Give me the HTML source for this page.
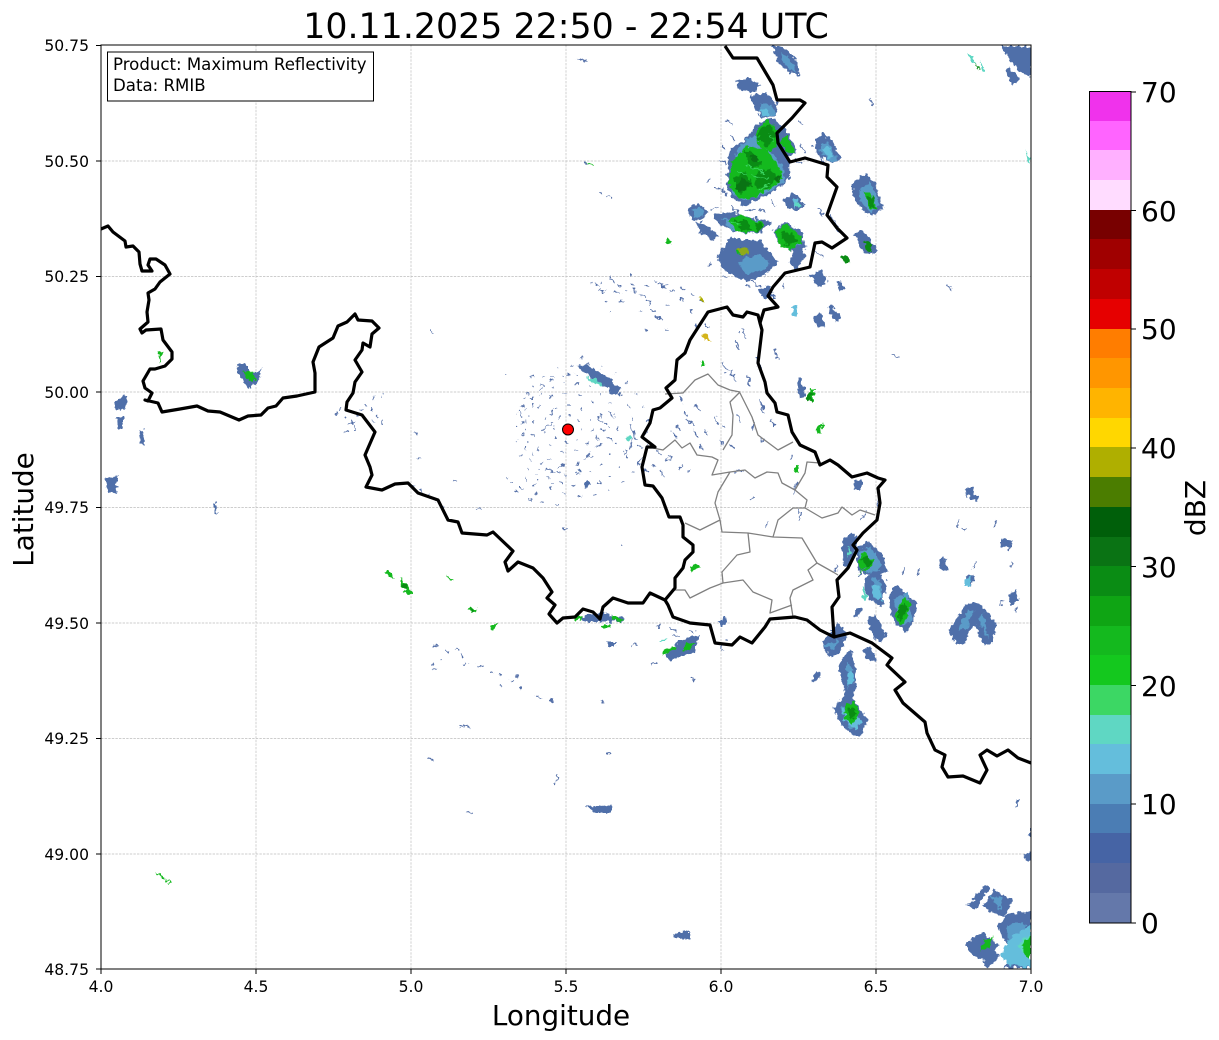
<!DOCTYPE html>
<html><head><meta charset="utf-8"><style>
html,body{margin:0;padding:0;background:#fff;width:1219px;height:1040px;overflow:hidden}
svg{display:block}
text{font-family:"DejaVu Sans","Liberation Sans",sans-serif;fill:#000}
.y{font-size:15.6px;text-anchor:end}
.x{font-size:15.6px;text-anchor:middle}
.c{font-size:28px}
.bl{fill:#4f6fa9}.cy{fill:#5a9bc8}.sk{fill:#64bedc}.te{fill:#5fd7c3}.lg{fill:#3cd764}.gr{fill:#14b91e}.dg{fill:#0a8c14}.vd{fill:#0a7314}
.sp{fill:none;stroke:#5570a8;stroke-width:1.3}
</style></head><body>
<svg width="1219" height="1040" viewBox="0 0 1219 1040" xmlns="http://www.w3.org/2000/svg">
<defs><clipPath id="ax"><rect x="101" y="45" width="930" height="924"/></clipPath>
<filter id="j" filterUnits="userSpaceOnUse" x="101" y="45" width="930" height="924" color-interpolation-filters="sRGB">
<feTurbulence type="fractalNoise" baseFrequency="0.22" numOctaves="2" seed="4" result="n"/>
<feDisplacementMap in="SourceGraphic" in2="n" scale="7" xChannelSelector="R" yChannelSelector="G"/>
</filter></defs>
<text x="566" y="38" font-size="34.800" text-anchor="middle">10.11.2025 22:50 - 22:54 UTC</text>
<g stroke="#bdbdbd" stroke-width=".7" stroke-dasharray="2.4 1.2" fill="none">
<path d="M256 45V969M411 45V969M566 45V969M721 45V969M876 45V969M101 161H1031M101 276.500H1031M101 392H1031M101 507.500H1031M101 623H1031M101 738.500H1031M101 854H1031"/>
</g>
<g clip-path="url(#ax)">
<g filter="url(#j)">
<!-- blue base -->
<path class="bl" d="M772 46L782 46L797 60L800 76L788 72L778 62ZM735 80L748 78L760 85L755 92L740 90ZM750 96L765 93L778 105L775 115L762 118L755 108ZM730 148L745 140L755 125L772 118L783 126L797 150L788 156L791 176L780 187L765 197L745 206L735 200L727 190L728 165ZM778 134L788 134L797 152L786 158L778 148ZM813 146L822 133L832 140L841 160L830 162L818 155ZM853 183L865 173L875 183L883 208L872 217L858 206L853 195ZM783 200L793 193L805 203L798 212L788 208ZM688 208L698 203L708 212L702 221L692 219ZM713 215L730 212L772 222L760 233L735 232L720 225ZM773 232L785 222L800 230L807 248L795 253L780 245ZM795 245L807 255L800 264L795 270L789 262ZM717 256L730 237L745 240L760 240L778 262L765 275L750 281L735 277L722 268ZM695 222L705 224L720 236L712 240L700 232ZM758 290L768 285L775 298L764 298ZM853 234L862 230L877 248L874 254L864 252ZM810 275L822 270L827 283L818 287ZM837 282L842 281L844 290L839 291ZM813 318L820 312L825 325L818 328ZM827 308L832 305L842 318L835 322ZM1000 46L1031 46L1031 77L1020 72ZM1005 70L1010 67L1020 80L1012 85ZM797 378L801 378L806 396L800 398ZM853 482L862 480L862 490L855 490ZM965 490L972 487L978 500L970 500ZM1002 539L1013 540L1010 549L1002 546ZM842 540L852 532L858 540L850 567L843 565ZM856 548L868 542L882 553L887 572L872 577L858 570ZM867 576L878 570L887 585L882 607L870 600L865 590ZM888 596L896 585L917 603L912 625L905 633L892 618ZM853 617L858 607L862 609L858 618ZM867 620L874 615L887 635L882 643L874 638ZM862 650L870 647L877 660L870 663ZM949 632L965 605L978 602L997 625L992 643L984 645L975 625L962 645L955 642ZM938 560L945 558L947 570L940 570ZM1008 595L1016 590L1018 600L1012 607ZM823 642L838 623L848 635L838 655L828 657ZM838 665L850 650L857 670L855 692L850 710L838 710L845 690ZM833 708L848 693L868 720L860 738L845 730ZM718 622L726 617L727 622L722 627ZM810 680L820 670L822 675L814 683ZM115 402L124 395L127 398L126 408L117 410ZM117 416L123 416L123 430L118 430ZM139 430L143 430L145 446L141 444ZM106 478L118 477L117 494L108 492ZM237 365L245 363L250 375L263 368L260 378L250 388L240 378ZM213 503L216 503L218 514L215 513ZM585 806L611 805L611 813L597 813ZM673 935L690 929L690 940L677 938ZM580 618L600 612L625 618L622 622L585 622ZM607 642L617 642L615 646L608 646ZM967 905L985 885L990 888L975 910ZM983 905L995 890L1013 900L1005 917L990 912ZM965 945L980 932L1000 945L985 960L972 955ZM997 925L1010 913L1031 912L1031 968L1003 968L1022 950L1005 942ZM982 960L993 948L1000 955L988 968ZM1031 825L1028 836L1031 838ZM1024 855L1031 850L1031 862L1026 862ZM1015 800L1020 800L1016 808ZM965 576L975 575L970 588ZM680 640L700 635L695 652L670 660L665 655Z"/>
<path class="sp" d="M1001 542l8 3M1011 542l-2 7M947 284l4 6M893 355l6 1M928 734l4 6M815 250l9 8M818 208l5 8M830 215l10 18M820 155l6 10M798 120l4 4M725 120l8 5M712 210l6-4M870 100l4 5M741 330l5 8M735 340l4 10M748 375l2 12M760 400l3 10M775 348l3 12M757 357l3 12M722 362l5 10M730 370l6 12M755 420l-3 10M762 405l2 8M771 420l3 6M737 415l3 8M720 440l3 5M730 445l4 2M795 488l-3 6M798 482l-3 5M790 455l2 5M760 435l3 6M680 395l3 8M683 412l5 4M676 425l4 6M687 420l6 5M693 430l4 7M705 430l3 4M715 418l3 6M723 425l2 3M652 465l4 2M660 470l4 6M682 465l-2 6M645 470l3 3M690 470l-3 2M700 445l3 6M672 432l5 5M695 405l4 6M668 455l4 3M670 458l-5 5M658 450l2 4M735 472l8-2M750 500l3-3M768 521l-2 7M799 520l3-8M800 510l-2 4M860 520l3-4M866 510l-2 8M877 500l1 8M838 565l-4 8M858 577l2-6M962 528l4 1M957 527l1-6M1010 567l3-4M1011 543l-3 8M996 520l-2 8M917 575l2-5M905 567l-3 8M944 560l-3 7M976 560l-3 8M1000 606l3-6M1015 612l3-6"/>
<path class="sp" d="M595 283l4 3M600 290l6 2M610 278l5 4M615 292l6 2M620 300l5 1M630 283l4 3M632 290l5 2M640 295l6 2M647 300l4 4M605 300l3 1M660 285l6 2M670 290l5 2M680 287l5 3M665 305l3 2M680 297l4 4M690 293l4 3M650 310l6 2M655 317l8 3M598 290l2-2M610 310l2 0M640 310l3 2M690 310l2 3M700 300l3 3M655 280l3 2M630 275l3 0M618 285l2 2M625 290l2 2M645 285l3 2M590 283l2 0M600 283l2 0M695 325l3 4M645 330l3 2M665 330l3 0M705 323l3 5"/>
<!-- speckles west -->
<path class="sp" d="M341 407l-2 3M336 412l1 3M345 418l3-2M352 420l2 3M360 412l4-2M365 406l3 2M372 408l-2 4M376 415l2 2M344 433l5-2M348 425l6-2M354 430l1-4M355 415l3 0M373 420l2 2M382 420l0 4M373 397l1 3M382 396l1 0M414 432l2 3M418 458l2 2M454 480l4 1M412 485l4 2M420 490l3 3M428 496l5 2M435 502l4 1M443 505l3 1M478 508l3 1M475 510l3 1M530 376l4 0M435 645l4 1M445 650l4 2M440 660l3 0M455 648l5 2M460 655l3 3M463 665l4-2M430 665l3-1M432 670l4 0M478 665l6 2M490 672l4 1M498 675l4 0M500 685l3 3M510 680l4 1M520 688l3 0M515 677l5-1M535 697l8 1M550 700l5 1M458 725l5 2M464 725l6 2M428 758l5 2M558 775l-2 5M555 785l2-2M608 752l2 2M602 700l2 3M467 812l6 2M692 679l2 1M725 640l3 0M720 648l2-2M720 650l4 0M670 628l6 3M673 635l5 2M690 630l5 3M683 640l3 2M657 627l4-1M632 645l6 0M652 664l4-2M577 59l9 1M690 678l3 0"/>
<path class="sp" d="M586 60l3 1M430 332l2 0M584 163l3 1M599 193l4 2M607 196l4 2M605 197l2 0M563 529l3 0M620 545l2 0"/>
<!-- radar rings -->
<g fill="none" stroke="#5570a8" stroke-width="1.100">
<circle cx="568" cy="429" r="14" stroke-dasharray="2 9"/>
<circle cx="568" cy="429" r="24" stroke-dasharray="3 11"/>
<circle cx="568" cy="429" r="36" stroke-dasharray="3 12"/>
<circle cx="572" cy="429" r="46" stroke-dasharray="2 11"/>
<circle cx="578" cy="430" r="56" stroke-dasharray="3 10"/>
<circle cx="582" cy="430" r="66" stroke-dasharray="2 13"/>
<path d="M542 431l6-6 5-3M550 415l3-5M605 424l4 3M598 417l4 5M600 428l6 2M610 412l3 6M607 437l5 4M596 447l6-3M585 459l5-6M596 435l3 6M548 470l8 3M557 468l7-3M560 472l-2 1M629 425l5 8 1 7M632 440l-2 8M626 450l-2 5M638 445l4 4M640 461l-2 4"/>
<path stroke-width="1.100" d="M505 477l3 1M515 490l3 2M510 483l2 0M525 478l2 4M535 495l3-2M533 485l4-1M521 488l3 0M540 501l4 1M530 498l2 3M545 470l3-1M550 485l2 0M536 475l1 0M555 505l4 0M527 394l3 1M520 413l2 4M525 420l1 3M520 405l3 1M550 395l0 3M550 377l4 0M566 373l3 3M540 385l4 1M505 375l2 1M580 357l3 2"/>
</g>
<path class="bl" d="M578 366l4-2 12 4 26 19-1 7-3 1-22-15-12-9ZM583 483l5-2 2 4-6 2ZM576 471l4-1 2 2-5 1Z"/>
<path class="te" d="M586 377l10 2 8 6-3 1-10-4ZM625 437l5-2 2 4-5 2Z"/>
<!-- cyan -->
<path class="cy" d="M782 52L790 60L797 72L790 70L782 60ZM760 103L772 105L775 114L764 116ZM740 145L755 135L765 145L782 165L785 180L770 192L745 200L733 195L730 170ZM820 145L828 142L838 160L829 161L820 152ZM860 190L870 182L880 205L870 213L860 200ZM692 210L700 207L705 215L695 218ZM722 218L760 220L758 230L732 230ZM781 232L795 230L800 245L787 248ZM738 262L745 258L760 254L770 262L762 270L745 274ZM858 552L870 548L880 560L880 570L868 573ZM872 578L880 580L884 600L874 598ZM893 600L908 592L912 620L902 626ZM958 630L968 610L974 610L968 628ZM984 612L988 640L978 620ZM846 660L852 670L848 690ZM840 705L860 722L850 730ZM1005 925L1025 922L1031 960L1012 963ZM990 895L1003 897L1000 910ZM825 645L838 640L836 648L830 650Z"/>
<path class="sk" d="M847 672l6 0 1 12-6 0ZM871 585l8 0 3 14-7 0ZM842 708l12 4 8 10-7 8-11-10ZM792 200l5-2 2 8-5 2ZM1000 956L1012 935L1031 925L1031 968L1010 965ZM822 149l7-2 5 10-6 2ZM758 110l8-1 4 5-6 2ZM792 307l5-1 1 10-4 0ZM965 580l7-4-2 10-5 0Z"/>
<path class="te" d="M1018 945l13-12 0 14-8 6ZM848 545l4 8-4 3ZM794 202l6 0 0 5-5 0ZM980 60l5 11-3 0ZM966 52l6 5 4 7-3-1ZM1025 150l5 8 1 4-3-1ZM862 585L868 597 864 600ZM660 640l8-2-4 4Z"/>
<!-- greens -->
<path class="gr" d="M757 128L768 120L780 132L776 145L770 152L758 145ZM781 137L787 136L795 152L788 154L782 146ZM733 160L745 147L765 148L782 170L782 180L768 190L750 199L737 197L728 182ZM727 220L740 214L765 224L760 231L738 232ZM775 231L785 225L797 232L803 240L790 250L780 246ZM864 192L870 192L878 210L870 208ZM857 575L865 570L868 565ZM895 615L905 595L911 605L904 623L900 625ZM858 562L864 552L874 562L868 571L860 570ZM846 705L854 702L860 715L852 725L844 718ZM748 250L737 256L735 250ZM985 940L993 936L990 948L980 950ZM1022 945L1031 935L1031 958L1025 955ZM794 468l4-1 1 5-4 1ZM817 425l6-2-2 10-5 0ZM810 388l4 1 0 12-5 0ZM666 238l6 4-3 3-5-3ZM690 567l8-3 4 2-10 6ZM388 570l6 8-3 0-6-6ZM400 578l8 8 5 8-5 1-5-6ZM470 607l8 3-4 3-6-3ZM493 623l4 1-2 5-6-3ZM445 574l8 7-3 0ZM574 616l10-1-3 5-7 2ZM603 624l8 0-1 4-8 0ZM612 614l12 6-4 2-8-1ZM663 650l13-5-2 5-12 5ZM685 644l10-2-5 8-5 1ZM158 352l5-2-3 14ZM242 372l12-1 1 10-6 0ZM155 870l6 5 4 4-3 0ZM165 878l8 6-3 0ZM586 163l8 1-2 2ZM700 360l3 0 2 5-3 0Z"/>
<path class="dg" d="M760 128L770 124L776 135L768 148L758 140ZM745 150L755 155L762 165L750 168ZM733 178L745 172L752 185L740 195ZM757 172L770 170L778 178L766 190L755 186ZM735 220L745 220L752 229L743 231ZM755 222L764 225L758 232ZM780 232L790 232L797 240L787 247ZM865 240L872 243L870 252L865 248ZM866 195L873 198L876 210L870 205ZM898 610L905 603L908 610L900 622ZM848 708L855 708L857 716L850 720ZM862 558L868 556L872 563L866 568ZM840 255l7 2 4 5-5 2ZM808 391l5 2-1 8-5-1ZM402 582l5 3-3 5ZM470 608l5 2-2 3ZM740 247L746 250 742 256ZM973 62l7 7-2 0Z"/>
<path d="M737 250l8-3 4 6-6 3Z" fill="#8faa1a"/><path d="M700 333l8 3 2 5-5 0Z" fill="#d4b41a"/><path d="M697 296l5 2 3 5-2 0Z" fill="#afaf00"/>
<path class="vd" d="M736 184L744 178 750 184 744 192 738 192ZM775 176l5 0 0 5-4 2ZM750 156l6-1 2 6-4 2Z"/>
<path fill="none" stroke="#3cd764" stroke-width="1" d="M745 165l20 8M750 176l18 3M738 172l9 3M758 190l12-6M730 222l10 2M770 135l4 6"/>
<path class="sp" stroke-width="1.500" d="M730 135l5 6M722 145l4 6M720 160l6 4M722 190l5 6M730 205l8 8M745 210l10 0M760 208l6 5M770 200l6 6M800 145l5 7M795 158l7 6M708 236l6 5M712 262l-3 3M722 275l6 4M745 285l6 2M752 281l8 6M782 283l3 6M720 190l-4-3M710 180l-5 2"/>
</g>
</g>
<!-- admin -->
<g fill="none" stroke="#808080" stroke-width="1.300" stroke-linejoin="round">
<path d="M665 394L683 393L695 380L708 374L718 385L730 390L740 392L730 402L733 415L732 435L723 450M740 393L752 417L758 435L778 450L793 442M653 448L663 450L675 440L682 448L690 443L697 455L712 457L718 460L712 475L730 472L745 470L755 478L767 472L778 473L782 483L795 490L805 473L807 462L820 463M795 490L807 500L805 508L822 518L838 513L842 507L852 515L860 510L875 515M730 472L718 492L715 503L720 520L700 530L685 523M720 520L722 532L748 533L773 537L778 520L793 508L805 508M748 533L750 552L737 555L722 572L723 583L710 588L690 598L685 590L673 590M773 537L802 538L817 563L833 572L838 575M817 563L808 570L813 580L793 590L790 598L793 617M723 583L743 580L753 592L772 600L770 613L792 605"/>
</g>
<!-- borders -->
<g clip-path="url(#ax)" fill="none" stroke="#000" stroke-width="3.200" stroke-linejoin="round">
<path d="M101 229L108 226L113 232L125 241L126 247L133 246L139 252L140 264L142 271L152 271L148 265L150 259L156 259L165 265L170 274L160 282L155 289L148 293L149 300L147 312L148 322L140 329L142 333L146 330L161 329L163 340L172 352L172 359L165 366L155 369L150 369L143 381L145 388L152 393L148 401L145 400L158 403L162 412L180 409L197 406L208 411L220 412L239 420L248 416L261 415L268 408L276 406L283 398L297 396L315 392L315 373L313 362L319 347L333 338L338 326L347 322L355 314L358 320L372 321L379 328L372 334L370 347L363 343L362 350L355 360L362 372L355 382L353 393L347 402L346 410L362 415L375 432L365 455L370 467L372 475L366 487L382 490L395 484L408 483L418 493L438 500L448 520L458 522L462 533L487 535L493 532L513 551L505 562L508 571L518 562L533 568L543 578L552 592L547 598L555 605L549 614L557 623L563 618L575 617L583 609L593 612L600 619L603 607L613 598L628 603L643 603L650 593L665 600"/>
<path d="M665 600L675 588L675 578L683 568L685 560L693 552L693 545L683 537L683 525L680 517L669 517L662 498L653 486L645 485L642 467L647 447L655 447L642 437L650 423L653 410L660 408L672 398L666 388L675 380L677 360L685 353L690 340L708 312L727 307L733 315L743 317L747 312L758 315L760 323L762 330L758 363L765 382L767 393L775 403L777 412L788 415L792 432L800 445L815 452L820 465L830 460L838 465L852 477L867 473L878 478L885 480L878 488L880 503L877 520L863 533L853 545L857 550L848 568L837 580L839 597L832 607L834 637L820 630L807 620L795 617L770 619L765 627L752 643L740 637L732 645L715 643L710 625L690 623L673 617L668 605L665 600Z"/>
<path d="M834 637L850 633L872 643L892 658L887 665L905 682L895 690L903 703L925 722L927 733L935 750L945 755L942 767L948 777L963 776L980 783L987 770L980 755L987 750L997 756L1008 750L1018 758L1031 763"/>
<path d="M760 323L764 310L778 307L768 296L773 287L785 273L810 267L815 243L822 242L832 248L847 238L837 228L827 215L837 187L827 177L828 165L805 158L790 162L778 143L777 133L792 118L805 103L800 100L777 100L773 85L757 58L733 58L725 46"/>
</g>
<circle cx="568" cy="429.500" r="5.500" fill="#f00" stroke="#000" stroke-width="1"/>
<rect x="101" y="45" width="930" height="924" fill="none" stroke="#000" stroke-width="1"/>
<rect x="107.500" y="52" width="266" height="49" fill="#fff" stroke="#000" stroke-width="1"/>
<text x="113" y="70" font-size="16.600">Product: Maximum Reflectivity</text>
<text x="113" y="91" font-size="16.600">Data: RMIB</text>
<g stroke="#000" stroke-width="1"><path d="M96 45.500H101M96 161H101M96 276.500H101M96 392H101M96 507.500H101M96 623H101M96 738.500H101M96 854H101M96 969H101M101 969V974M256 969V974M411 969V974M566 969V974M721 969V974M876 969V974M1031 969V974"/></g>
<text class="y" x="89" y="51">50.75</text><text class="y" x="89" y="167">50.50</text><text class="y" x="89" y="282">50.25</text><text class="y" x="89" y="398">50.00</text><text class="y" x="89" y="513">49.75</text><text class="y" x="89" y="629">49.50</text><text class="y" x="89" y="744">49.25</text><text class="y" x="89" y="860">49.00</text><text class="y" x="89" y="975">48.75</text>
<text class="x" x="101" y="992">4.0</text><text class="x" x="256" y="992">4.5</text><text class="x" x="411" y="992">5.0</text><text class="x" x="566" y="992">5.5</text><text class="x" x="721" y="992">6.0</text><text class="x" x="876" y="992">6.5</text><text class="x" x="1031" y="992">7.0</text>
<text x="561" y="1025" font-size="27.800" text-anchor="middle">Longitude</text>
<text transform="translate(33 509.500) rotate(-90)" font-size="27.800" text-anchor="middle">Latitude</text>
<!-- colorbar -->
<g shape-rendering="crispEdges">
<rect x="1090" y="92" width="41" height="30" fill="#f032ec"/><rect x="1090" y="121" width="41" height="30" fill="#ff64ff"/><rect x="1090" y="150" width="41" height="30" fill="#ffb0ff"/><rect x="1090" y="180" width="41" height="30" fill="#ffdcff"/>
<rect x="1090" y="210" width="41" height="30" fill="#780000"/><rect x="1090" y="239" width="41" height="30" fill="#a00000"/><rect x="1090" y="269" width="41" height="30" fill="#c00000"/><rect x="1090" y="299" width="41" height="30" fill="#e60000"/>
<rect x="1090" y="329" width="41" height="30" fill="#ff7d00"/><rect x="1090" y="358" width="41" height="30" fill="#ff9600"/><rect x="1090" y="388" width="41" height="30" fill="#ffb400"/><rect x="1090" y="418" width="41" height="30" fill="#ffd700"/>
<rect x="1090" y="447" width="41" height="30" fill="#afaf00"/><rect x="1090" y="477" width="41" height="30" fill="#4b7d00"/><rect x="1090" y="507" width="41" height="30" fill="#005f0a"/><rect x="1090" y="537" width="41" height="30" fill="#0a7314"/>
<rect x="1090" y="566" width="41" height="30" fill="#0a8c14"/><rect x="1090" y="596" width="41" height="30" fill="#0fa514"/><rect x="1090" y="626" width="41" height="30" fill="#14b91e"/><rect x="1090" y="655" width="41" height="30" fill="#14c81e"/>
<rect x="1090" y="685" width="41" height="30" fill="#3cd764"/><rect x="1090" y="715" width="41" height="30" fill="#5fd7c3"/><rect x="1090" y="744" width="41" height="30" fill="#64bedc"/><rect x="1090" y="774" width="41" height="30" fill="#5a9bc8"/>
<rect x="1090" y="804" width="41" height="30" fill="#4b7db4"/><rect x="1090" y="833" width="41" height="30" fill="#4664a5"/><rect x="1090" y="863" width="41" height="30" fill="#5569a0"/><rect x="1090" y="893" width="41" height="30" fill="#6478aa"/>
</g>
<rect x="1089.500" y="91.500" width="41.500" height="831.500" fill="none" stroke="#000" stroke-width="1"/>
<path d="M1131 92H1136M1131 210.500H1136M1131 329H1136M1131 448H1136M1131 566.500H1136M1131 685.500H1136M1131 804H1136M1131 923H1136" stroke="#000" stroke-width="1"/>
<text class="c" x="1141" y="102">70</text><text class="c" x="1141" y="221">60</text><text class="c" x="1141" y="339">50</text><text class="c" x="1141" y="458">40</text><text class="c" x="1141" y="577">30</text><text class="c" x="1141" y="696">20</text><text class="c" x="1141" y="814">10</text><text class="c" x="1141" y="933">0</text>
<text transform="translate(1205 508) rotate(-90)" font-size="28" text-anchor="middle">dBZ</text>
</svg>
</body></html>
